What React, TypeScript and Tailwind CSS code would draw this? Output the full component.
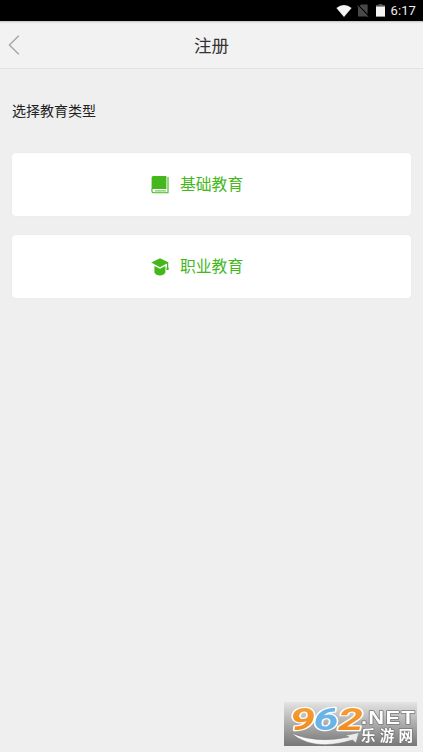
import React from 'react';
type EducationType = {
  id: string;
  label: string;
  icon: React.ReactNode;
};
function BookIcon() {
  return <svg className="w-[18px] h-[18px]" viewBox="0 0 18 18" fill="none">
      <path d="M2.2 0H15.4V13H2.4Q1.2 13 0.6 13.6V1.6Q0.6 0 2.2 0Z" fill="#43b71c" />
      <path d="M17 1V16.8H2.4Q0.9 16.6 0.9 15V13" stroke="#43b71c" strokeWidth="1.1" />
      <path d="M4 14.9H15" stroke="#43b71c" strokeWidth="0.9" />
    </svg>;
}
function GraduationIcon() {
  return <svg className="w-[18px] h-[18px]" viewBox="0 0 18 18" fill="#43b71c">
      <path d="M9 0.2L17.8 4.6L9 9.2L0.2 4.6Z" />
      <path d="M3.4 7.9L9 10.7L14.4 7.9V14.4Q12.8 17.4 9 17.4Q5 17.4 3.4 14.4Z" />
      <path d="M16 5H17.2V9Q18 9.8 17.6 12H15.4Q15.2 9.8 16 9Z" />
    </svg>;
}
const types: EducationType[] = [{
  id: 'basic',
  label: '基础教育',
  icon: <BookIcon />
}, {
  id: 'vocational',
  label: '职业教育',
  icon: <GraduationIcon />
}];
function StatusBar() {
  return <div className="h-[21px] bg-black flex items-center justify-end pr-[7px] text-white">
      <svg className="w-4 h-3 mr-[5px]" viewBox="0 0 16 12" fill="#f4f4f4">
        <path d="M0.4 3Q8 -2.8 15.6 3L8 12Z" />
      </svg>
      <svg className="w-3 h-[13px] mr-[7px]" viewBox="0 0 12 13">
        <path d="M4 0.6H10.6V12.4H1V3.6Z" fill="#484848" />
        <path d="M0.4 0.4L11.6 12" stroke="#000" strokeWidth="1.2" />
        <path d="M0 1.4L11 12.8" stroke="#555" strokeWidth="1" />
      </svg>
      <svg className="w-[9px] h-[13px] mr-[6px]" viewBox="0 0 9 13">
        <path d="M2.6 0H6.4V1H9V3H0V1H2.6Z" fill="#555" />
        <path d="M0 2.6H9V12.6H0Z" fill="#f4f4f4" />
      </svg>
      <span className="font-['Roboto',sans-serif] text-[13px] leading-[21px] tracking-[0.1px] text-[#eee]">6:17</span>
    </div>;
}
function Header() {
  return <header className="h-12 bg-[#f2f2f2] border-b border-[#e2e2e2] shadow-[inset_0_3px_2px_-2px_#bdbdbd] grid grid-cols-[40px_1fr_40px] items-center">
      <button className="pl-2">
        <svg className="w-3 h-5" viewBox="0 0 12 20" fill="none" stroke="#a6a6a6" strokeWidth="1.4">
          <path d="M10.8 0.8L1.4 10L10.8 19.2" />
        </svg>
      </button>
      <h1 className="text-center text-[17.5px] leading-6 text-[#333]">注册</h1>
    </header>;
}
function SiteBadge() {
  return <div className="fixed left-[284px] top-[702px] w-[133px] h-11 bg-linear-to-b from-[#e4e4e4] to-[#777]">
      <svg className="w-[133px] h-11 overflow-visible" viewBox="0 0 133 44">
        <defs>
          <linearGradient id="swoosh" x1="0" x2="1">
            <stop offset="0" stopColor="#fff" />
            <stop offset="1" stopColor="#e8e8e8" />
          </linearGradient>
          <linearGradient id="orange" x1="0" y1="0" x2="0" y2="1">
            <stop offset="0" stopColor="#f6a338" />
            <stop offset="1" stopColor="#f0851c" />
          </linearGradient>
        </defs>
        <path d="M7 31Q32 42 65 35L61 33.5L75 30.5L72 41L68.5 38Q29 50 7 31Z" fill="url(#swoosh)" stroke="#777" strokeWidth="0.5" />
        <g fontFamily="Roboto, sans-serif" fontWeight="700" fontStyle="italic" fontSize="32" stroke="#fff" strokeWidth="2.4" strokeLinejoin="round" style={{ paintOrder: 'stroke' }}>
          <text x="6" y="27.5" textLength="25" lengthAdjust="spacingAndGlyphs" fill="url(#orange)">9</text>
          <text x="29.5" y="27.5" textLength="25" lengthAdjust="spacingAndGlyphs" fill="#68b4e6">6</text>
          <text x="54" y="27.5" textLength="25" lengthAdjust="spacingAndGlyphs" fill="url(#orange)">2</text>
        </g>
        <g fill="#fff" stroke="#777" strokeWidth="1.4" strokeLinejoin="round" style={{ paintOrder: 'stroke' }}>
          <text x="77" y="21.5" textLength="55" lengthAdjust="spacingAndGlyphs" letterSpacing="1" fontFamily="Liberation Sans, sans-serif" fontWeight="700" fontSize="17.5">.NET</text>
          <text x="77" y="39" textLength="52" fontFamily="Noto Sans CJK SC, sans-serif" fontWeight="700" fontSize="14.5">乐游网</text>
        </g>
      </svg>
    </div>;
}
export default function App() {
  return <div className="min-h-screen bg-[#efefef] font-['Noto_Sans_CJK_SC',sans-serif]">
      <StatusBar />
      <Header />
      <main className="px-3 pt-[31px]">
        <p className="text-sm leading-5 text-[#222]">选择教育类型</p>
        <div className="mt-[33px] space-y-[19px]">
          {types.map(type => <button key={type.id} className="w-full h-[63px] bg-white rounded-[4px] shadow-[0_0_1px_#ddd] flex items-center pl-[139px]">
              {type.icon}
              <span className="ml-[11px] pb-px text-[15.8px] leading-6 text-[#43b71c]">{type.label}</span>
            </button>)}
        </div>
      </main>
      <SiteBadge />
    </div>;
}
